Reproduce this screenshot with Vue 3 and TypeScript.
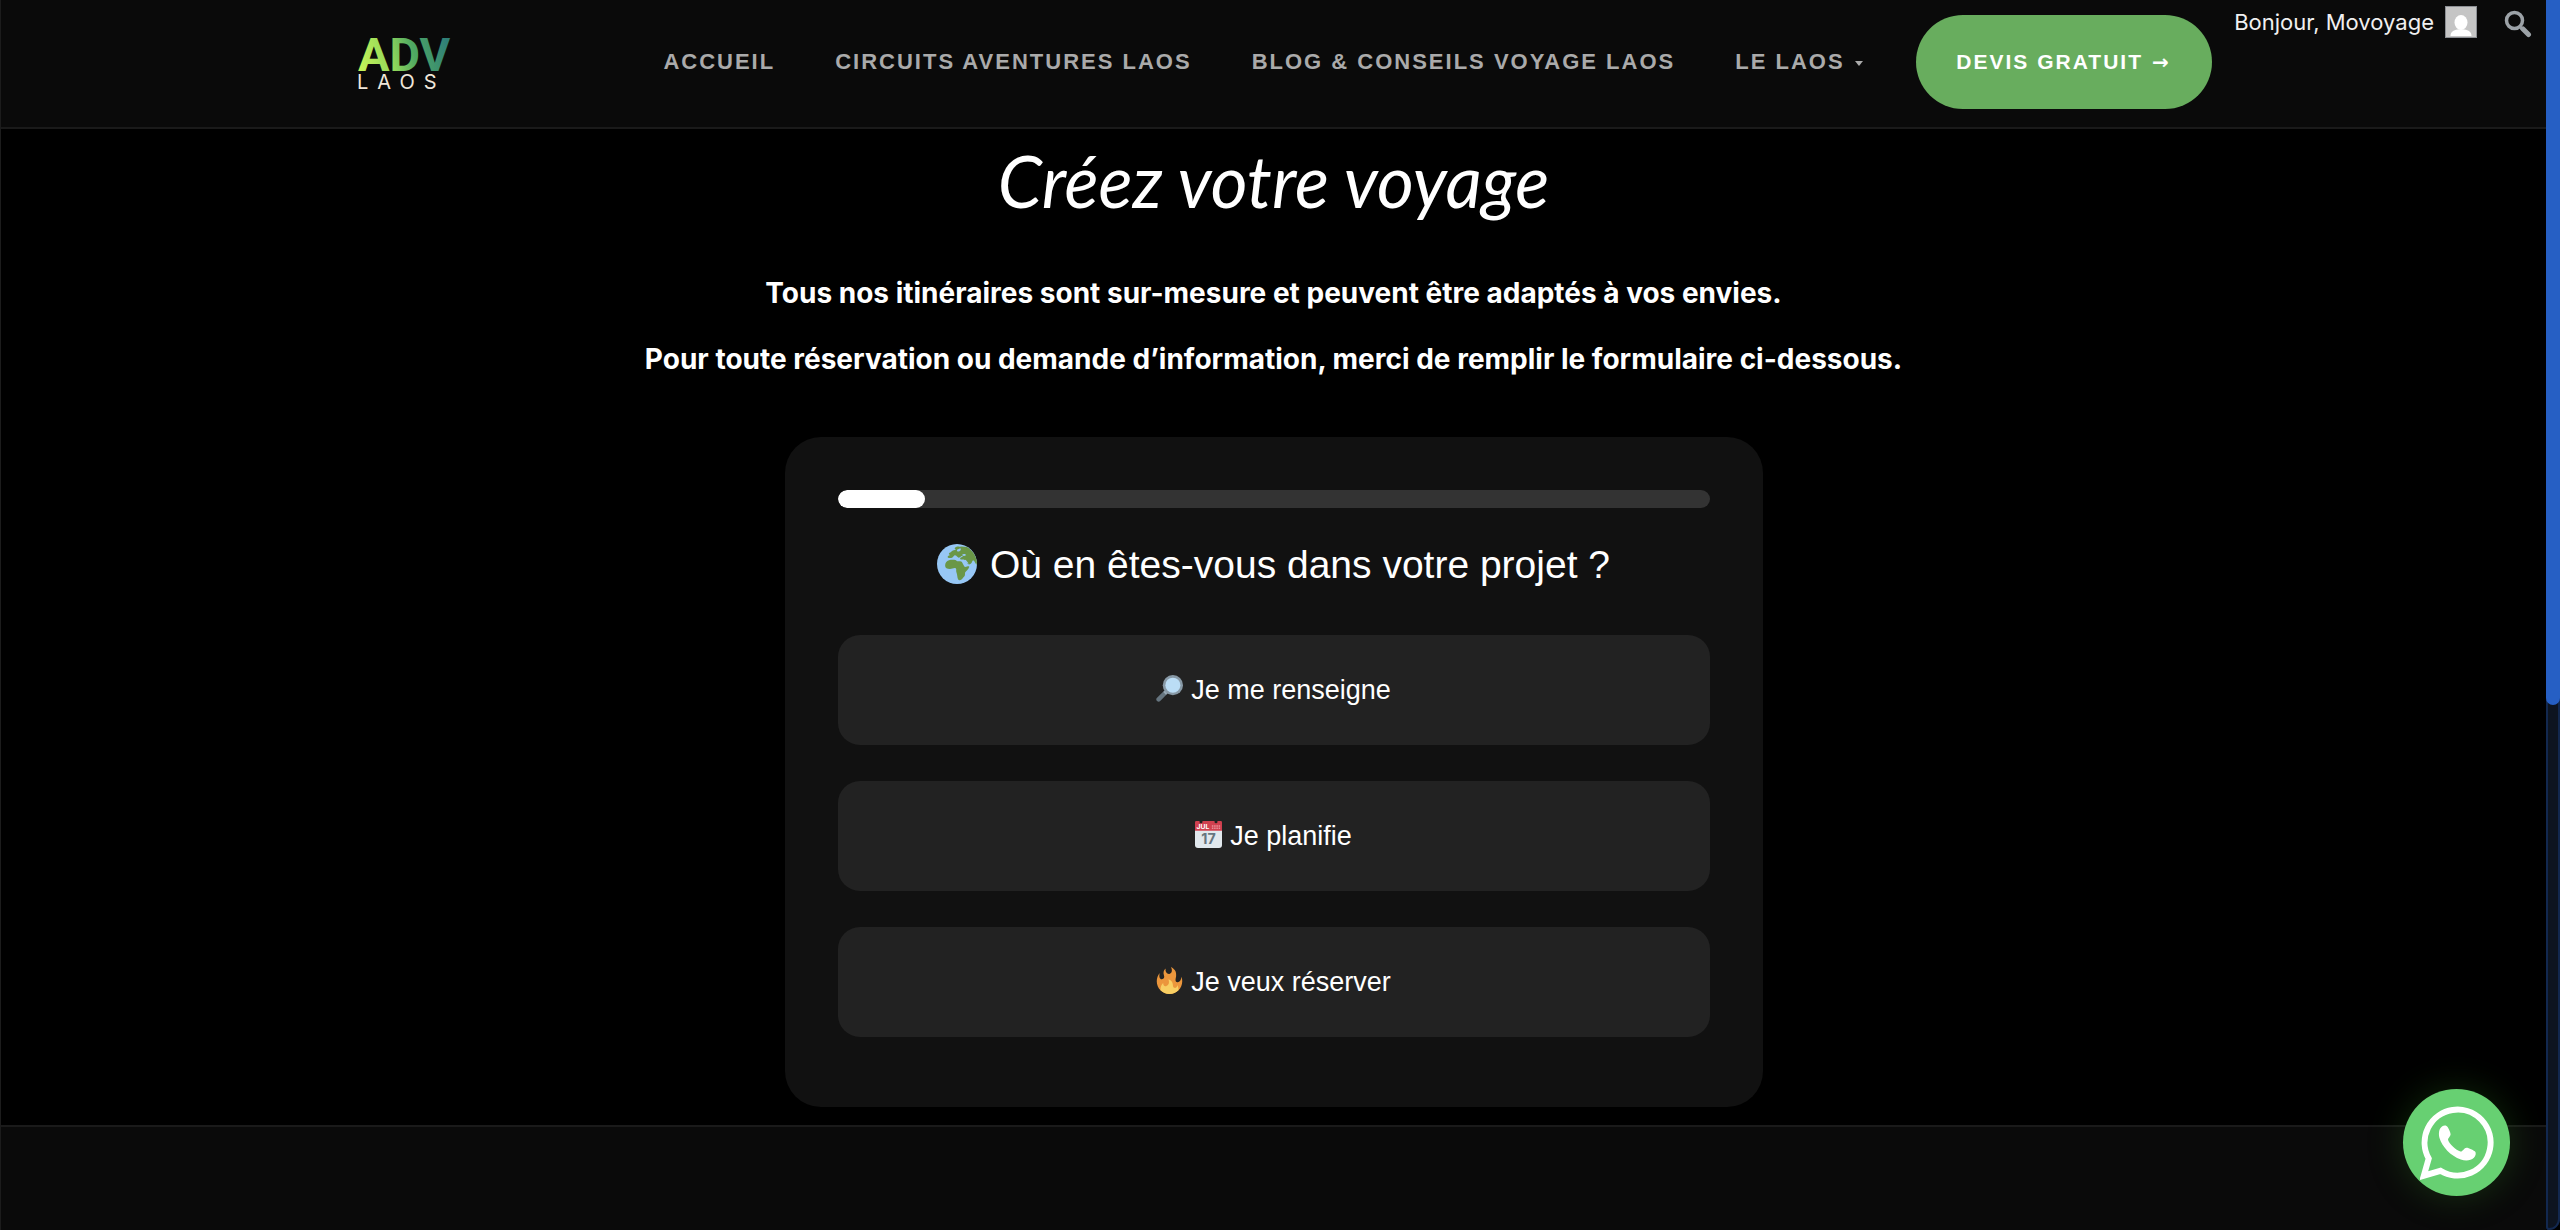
<script setup lang="ts">
import { ref } from 'vue'

interface NavLink {
  label: string
  submenu?: boolean
}

interface Choice {
  icon: 'search' | 'calendar' | 'fire'
  label: string
}

const links: NavLink[] = [
  { label: 'ACCUEIL' },
  { label: 'CIRCUITS AVENTURES LAOS' },
  { label: 'BLOG & CONSEILS VOYAGE LAOS' },
  { label: 'LE LAOS', submenu: true },
]

const choices: Choice[] = [
  { icon: 'search', label: 'Je me renseigne' },
  { icon: 'calendar', label: 'Je planifie' },
  { icon: 'fire', label: 'Je veux réserver' },
]

const progress = ref(10)
</script>

<template>
  <div class="window">
    <div class="page">
      <header class="header">
        <a class="logo" href="#" aria-label="ADV Laos">
          <svg width="112" height="76" viewBox="-4 -10 112 76">
            <defs>
              <linearGradient id="logo-fill" gradientUnits="userSpaceOnUse" x1="0" y1="34" x2="90" y2="12">
                <stop offset="0" stop-color="#c8f558" />
                <stop offset="0.38" stop-color="#8fd65a" />
                <stop offset="0.62" stop-color="#4fa862" />
                <stop offset="1" stop-color="#2f7f78" />
              </linearGradient>
            </defs>
            <text class="logo-name" x="-1" y="35" fill="url(#logo-fill)">ADV</text>
            <text class="logo-place" x="-2" y="53" fill="#efe6da">LAOS</text>
          </svg>
        </a>
        <nav class="nav">
          <a v-for="link in links" :key="link.label" class="nav-link" href="#">
            {{ link.label }}<span v-if="link.submenu" class="caret"></span>
          </a>
        </nav>
        <a class="quote" href="#">DEVIS GRATUIT <span class="arrow">→</span></a>
        <div class="account">
          <a class="hello" href="#">
            Bonjour, Movoyage
            <svg class="avatar" width="32" height="32" viewBox="0 0 32 32">
              <rect width="32" height="32" fill="#8c8f94" />
              <rect x="1" y="1" width="30" height="30" fill="#c5c5c5" />
              <ellipse cx="16" cy="16.500" rx="6.500" ry="7.500" fill="#fff" />
              <path d="M5.500 30c0-4 3-6 7-6.500h7c4 .5 7 2.500 7 6.500z" fill="#fff" />
            </svg>
          </a>
          <button class="search" type="button" aria-label="Rechercher">
            <svg width="28" height="28" viewBox="0 0 28 28" fill="none" stroke="#9ca2a7">
              <circle cx="10.500" cy="10.500" r="8" stroke-width="3.500" />
              <path d="M16.500 17.500l2 2" stroke-width="3" />
              <path d="M19 19l5.500 5.500" stroke-width="5" stroke-linecap="round" />
            </svg>
          </button>
        </div>
      </header>

      <main class="main">
        <h1 class="title">Créez votre voyage</h1>
        <p class="intro">Tous nos itinéraires sont sur-mesure et peuvent être adaptés à vos envies.</p>
        <p class="intro">Pour toute réservation ou demande d’information, merci de remplir le formulaire ci-dessous.</p>

        <form class="card" @submit.prevent>
          <div class="progress" role="progressbar" :aria-valuenow="progress" aria-valuemin="0" aria-valuemax="100">
            <div class="progress-fill" :style="{ width: progress + '%' }"></div>
          </div>
          <h2 class="question">
            <svg width="40" height="40" viewBox="0 0 36 36">
              <circle cx="18" cy="18" r="18" fill="#97c7f5" />
              <path fill="#6a9747" d="M7.300 19.500c0-2.500 1.200-4.300 3.500-4.900 2.200-.6 4.200-.5 6.400 0 .5 1 1.700.9 2.700 1 1.300 0 2.600.1 3 1.400l1.700 3.200c.5.800 1.500.3 2.500 0 .8-.2 2-.3 1.900.4-.4 2-2.800 3.300-3.600 4.900-.6 1.400.3 2.700-.9 3.700-1.200 1.100-2 3.200-4 3.500-1.500.1-2-1.800-2.200-3.400-.2-1.800-.6-3-1-4.500-.2-1 .3-2-.3-2.700-1.200-1.300-3.200.4-5.500.3-2.300 0-4.200-1-4.200-2.900z" />
              <path fill="#6a9747" d="M9.600 11.800c-.2-1.400 1.400-1.200 2-2l-1-.9c.4-1.400 1.800-1 2.400-2.100 1-1.500 3-1 4-1.900l-1.200-.9c.8-1.600 3-1.900 4.500-1.500l2-.3 4.700.4C31.500 5.500 35 9.500 36 16.500l-.5 2.300c-.8-1.500-1.500-2.500-2.200-3.800-1.200-.5-1.500.3-1.800 1.200-.4 1.400-1.700 1.800-2.700 2.300-1.600-.4-2.500-2.500-3.800-4-1.200-1-3-.2-4-.8-.7-.8.5-1.900 1.800-2 .8-.7-.5-1.300-1-.6-1.300.8-2 1.800-3.200.7-1.100-1-1.900-2.200-3-1.500-1 .8-1.400 2.300-3 2.300-1.300.1-2.900.4-3-.8z" />
              <path fill="#97c7f5" d="M18 5.200l3-1.400c1 .6.300 2.200-.8 2.700-1.400.6-2.600.3-2.200-1.300zM22.500 9.800c1-1.200 3.200-.9 3.800.2-.9 1-2.900 1-3.800-.2zM24.800 14.600l1-.4 2.700 3.400c-1.800.3-2.900-1.300-3.700-3z" />
            </svg>
            <span>Où en êtes-vous dans votre projet ?</span>
          </h2>
          <div class="choices">
            <button v-for="choice in choices" :key="choice.icon" class="choice" type="button">
              <svg v-if="choice.icon === 'search'" width="27" height="27" viewBox="0 0 36 36">
                <path d="M3.500 32.500L14 22" stroke="#66757f" stroke-width="6" stroke-linecap="round" />
                <path d="M11.500 24.500L15 21" stroke="#99aab5" stroke-width="5" />
                <circle cx="22.500" cy="13.500" r="13.500" fill="#8899a6" />
                <circle cx="22.500" cy="13.500" r="10" fill="#bbddf5" />
              </svg>
              <svg v-else-if="choice.icon === 'calendar'" width="27" height="27" viewBox="0 0 36 36">
                <path fill="#e1e8ed" d="M36 32a4 4 0 0 1-4 4H4a4 4 0 0 1-4-4V9h36z" />
                <path fill="#d0404f" d="M0 13V2c0-1.500 1-2 2-2h32c1 0 2 .5 2 2v11z" />
                <circle cx="8" cy="1" r="2" fill="#222" />
                <circle cx="28" cy="1" r="2" fill="#222" />
                <text class="cal-month" x="2" y="11" fill="#fff">JUL</text>
                <path d="M22.500 6.500h11M22.500 9.500h11" stroke="#e8909a" stroke-width="2" stroke-dasharray="2 1" />
                <text class="cal-day" x="18" y="31" text-anchor="middle" fill="#66757f">17</text>
              </svg>
              <svg v-else width="27" height="27" viewBox="0 0 36 36">
                <path fill="#eb963c" d="M35 19c0-2.062-.367-4.039-1.040-5.868-.46 5.389-3.333 8.157-6.335 6.868-2.812-1.208-.917-5.917-.777-8.164.236-3.809-.012-8.169-6.931-11.794 2.875 5.500.333 8.917-2.333 9.125-2.958.231-5.667-2.542-4.667-7.042-3.238 2.386-3.332 6.402-2.333 9 1.042 2.708-.042 4.958-2.583 5.208-2.840.28-4.418-3.041-2.963-8.333C2.520 10.965 1 14.805 1 19c0 9.389 7.611 17 17 17s17-7.611 17-17z" />
                <path fill="#f8cf63" d="M28.394 23.999c.148 3.084-2.561 4.293-4.019 3.709-2.106-.843-1.541-2.291-2.083-5.291s-2.625-5.083-5.708-6c2.250 6.333-1.247 8.667-3.080 9.084-1.872.426-3.753-.001-3.968-4.007C7.352 23.668 6 26.676 6 30c0 .368.023.73.055 1.090C9.125 34.124 13.342 36 18 36s8.875-1.876 11.945-4.910c.032-.36.055-.722.055-1.090 0-2.187-.584-4.236-1.606-6.001z" />
              </svg>
              <span>{{ choice.label }}</span>
            </button>
          </div>
        </form>
      </main>

      <footer class="footer"></footer>
    </div>

    <div class="scrollbar"><div class="thumb"></div></div>

    <a class="whatsapp" href="#" aria-label="WhatsApp">
      <svg width="74" height="74" viewBox="0 0 74 74">
        <path fill="none" stroke="#fff" stroke-width="6" d="M3.800 69.700L8.700 52.500A33 33 0 1 1 20.500 64.800z" />
        <path fill="#fff" d="M22 20.500c2-1.200 4.500-1.400 5.800.8 1.500 2.800 2.800 5.600 2.800 7.200 0 1.800-2.800 3.500-2.600 5.200.8 3.600 8 10.600 12.500 11.800 2 .4 3.700-3.800 6-3.800 2.500 0 7 2.600 8.600 3.800 1.300 1.300.6 4.600-1.200 6.300-3.200 3-8.500 3.200-13 1.700C30.500 50 22 40.500 19.500 32c-1.200-4.500-.5-9.500 2.500-11.500z" />
      </svg>
    </a>
  </div>
</template>

<style>
body {
  background: #000;
}
</style>

<style scoped>
.window {
  display: flex;
  min-height: 100vh;
  background: #000;
  color: #fff;
  font-family: "Liberation Sans", Arial, sans-serif;
}

.page {
  flex: 1;
  display: flex;
  flex-direction: column;
  box-sizing: border-box;
  border-left: 1px solid #1c1c1c;
}

a {
  color: inherit;
  text-decoration: none;
}

.header {
  display: flex;
  align-items: center;
  height: 127px;
  padding-left: 14vw;
  background: #0a0a0a;
  border-bottom: 2px solid #1a1a1a;
}

.logo {
  margin-left: -4px;
}

.logo svg,
.avatar,
.search svg {
  display: block;
}

.logo-name {
  font: 700 47px Roboto, sans-serif;
}

.logo-place {
  font: 400 20px Inter, sans-serif;
  letter-spacing: 9px;
}

.nav {
  display: flex;
  gap: 60px;
  margin: 0 53px 4px 196px;
  color: #aaa;
  font-size: 22px;
  font-weight: 700;
  line-height: 28px;
  letter-spacing: 2px;
  white-space: nowrap;
}

.nav-link {
  display: flex;
  align-items: center;
}

.caret {
  margin: 4px 0 0 10px;
  border: 4px solid transparent;
  border-top: 5px solid #aaa;
  border-bottom: 0;
}

.quote {
  display: flex;
  align-items: center;
  justify-content: center;
  box-sizing: border-box;
  width: 296px;
  height: 94px;
  margin-bottom: 4px;
  border-radius: 47px;
  background: #68ad5e;
  font-size: 21px;
  font-weight: 700;
  letter-spacing: 2px;
  white-space: nowrap;
}

.arrow {
  margin-left: 9px;
  font-family: "DejaVu Sans", sans-serif;
  font-size: 20px;
}

.account {
  display: flex;
  align-self: flex-start;
  gap: 27px;
  margin: 6px 14px 0 auto;
}

.hello {
  display: flex;
  align-items: center;
  gap: 11px;
  color: #f0f0f1;
  font: 400 22px/32px Inter, sans-serif;
  white-space: nowrap;
}

.search {
  margin: 3px 0 0;
  padding: 0;
  border: 0;
  background: none;
}

.main {
  display: flex;
  flex-direction: column;
  align-items: center;
  padding-bottom: 18px;
}

.title {
  margin: 2px 0 42px;
  font-family: "Lato", cursive;
  font-size: 71px;
  font-style: italic;
  font-weight: 400;
  line-height: 100px;
}

.intro {
  margin: 0 0 26px;
  font-family: Inter, sans-serif;
  font-size: 28px;
  font-weight: 700;
  line-height: 40px;
}

.card {
  box-sizing: border-box;
  width: 100%;
  max-width: 978px;
  margin-top: 32px;
  padding: 53px 53px 70px;
  border-radius: 36px;
  background: #111;
}

.progress {
  height: 18px;
  border-radius: 9px;
  background: #333;
  overflow: hidden;
}

.progress-fill {
  height: 100%;
  border-radius: 9px;
  background: #fff;
}

.question {
  display: flex;
  align-items: center;
  justify-content: center;
  gap: 13px;
  margin: 33px 0 46px;
  font-size: 39px;
  font-weight: 400;
  line-height: 48px;
}

.question svg {
  margin-bottom: 3px;
}

.choices {
  display: flex;
  flex-direction: column;
  gap: 36px;
}

.choice {
  display: flex;
  align-items: center;
  justify-content: center;
  gap: 8px;
  height: 110px;
  padding: 0;
  border: 0;
  border-radius: 22px;
  background: #222;
  color: #fff;
  font: 400 27px/36px "Liberation Sans", Arial, sans-serif;
}

.choice svg {
  margin-bottom: 3px;
}

.cal-month {
  font: 700 9px Inter, sans-serif;
}

.cal-day {
  font: 700 19px Inter, sans-serif;
}

.footer {
  flex: 1;
  border-top: 2px solid #1a1a1a;
  background: #0a0a0a;
}

.scrollbar {
  box-sizing: border-box;
  width: 14px;
  border-radius: 0 0 14px 4px;
  background: #0d1420;
  box-shadow: inset 0 0 0 2px #12284f;
}

.thumb {
  height: 57.3%;
  border-radius: 0 0 7px 7px;
  background: #265fc4;
}

.whatsapp {
  position: fixed;
  right: 50px;
  bottom: 34px;
  display: flex;
  align-items: center;
  justify-content: center;
  width: 107px;
  height: 107px;
  border-radius: 50%;
  background: #67d072;
  box-shadow: 0 0 36px rgba(60, 160, 40, 0.25);
}
</style>
